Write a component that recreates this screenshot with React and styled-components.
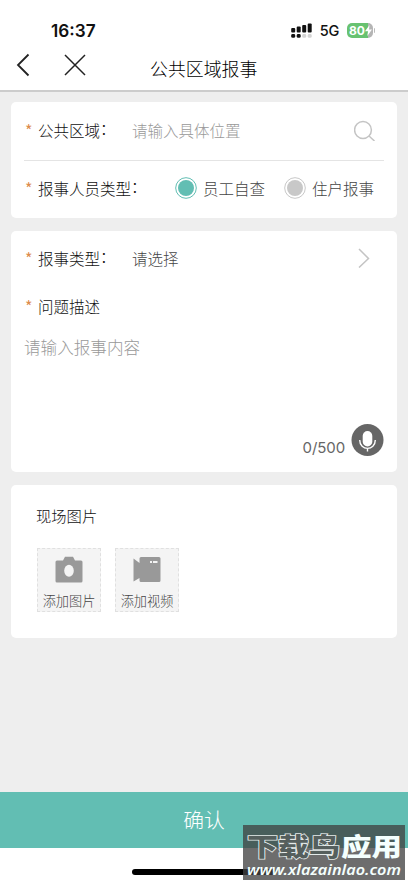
import React from 'react';
import styled, { createGlobalStyle } from 'styled-components';

const GlobalStyle = createGlobalStyle`
	* {
		box-sizing: border-box;
	}
	body {
		margin: 0;
		background: #fff;
		font-family: 'Noto Sans CJK SC', 'Liberation Sans', sans-serif;
		font-weight: 300;
		overflow: hidden;
	}
`;

const Page = styled.div`
	position: relative;
	display: flex;
	flex-flow: column;
	width: 408px;
	height: 883px;
	background: #eee;
`;

const StatusBar = styled.div`
	display: flex;
	align-items: center;
	height: 43px;
	padding: 18px 34px 0 51px;
	background: #fff;
	font-family: Inter, sans-serif;
	color: #111;
`;

const Time = styled.span`
	font-size: 17.2px;
	font-weight: 600;
	margin-right: auto;
`;

const Network = styled.span`
	font-size: 14.5px;
	font-weight: 500;
	letter-spacing: -0.3px;
	margin: 0 8px 0 7px;
`;

const Battery = styled.div`
	display: flex;
	align-items: center;
	width: 26px;
	height: 15px;
	padding-left: 2px;
	border-radius: 5px;
	background: linear-gradient(90deg, #68c271 80%, #b5b5b5 80%);
	color: #fff;
	font-size: 12px;
	font-weight: 700;
`;

const BatteryTip = styled.span`
	width: 1px;
	height: 5px;
	margin: 0 -1px 0 1px;
	border-radius: 0 1px 1px 0;
	background: #bbb;
`;

const NavBar = styled.div`
	display: grid;
	grid-template-columns: 150px 1fr 150px;
	align-items: center;
	height: 49px;
	background: #fff;
	border-bottom: 2px solid #ccc;
`;

const NavIcons = styled.div`
	display: flex;
	gap: 34px;
	height: 24px;
	padding-left: 16px;
	margin-top: -3px;
`;

const Title = styled.h1`
	margin: 2px 0 0;
	font-size: 17.9px;
	font-weight: inherit;
	line-height: 26px;
	white-space: nowrap;
	color: #000;
`;

const Main = styled.main`
	flex: 1;
	display: flex;
	flex-flow: column;
	gap: 13px;
	padding: 10px 11px 0;
`;

const Card = styled.section`
	height: ${(props) => props.$height}px;
	padding: 0 13px;
	border-radius: 5px;
	background: #fff;
`;

const Row = styled.div`
	display: flex;
	align-items: center;
	height: ${(props) => props.$height}px;
	padding-bottom: 2px;
	border-bottom: ${(props) => (props.$line ? '1px solid #e4e4e4' : 'none')};
	font-size: 15.5px;
	line-height: 24px;
	white-space: nowrap;
`;

const Star = styled.span`
	flex: none;
	width: 14px;
	padding-left: 1px;
	color: #dc8b4c;
	font-size: 16px;
	font-weight: 400;
`;

const Label = styled.label`
	flex: none;
	width: ${(props) => props.$width || 94}px;
	color: #111;
`;

const Colon = styled.span`
	line-height: 1;
	vertical-align: 2px;
`;

const Value = styled.span`
	color: ${(props) => (props.$muted ? '#999' : '#444')};
	margin-right: auto;
`;

const Option = styled.span`
	display: flex;
	flex: none;
	align-items: center;
	gap: 6px;
	margin-right: 19px;
	color: #444;
`;

const Editor = styled.div`
	display: flex;
	flex-flow: column;
	justify-content: space-between;
	height: 131px;
	padding-top: 8px;
	color: #999;
	font-size: 16.6px;
	line-height: 24px;
`;

const EditorFoot = styled.div`
	display: flex;
	justify-content: flex-end;
	gap: 6px;
	height: 34px;
	color: #666;
`;

const Counter = styled.span`
	padding-top: 12px;
	font-family: Inter, sans-serif;
	font-size: 15px;
	font-weight: 400;
	letter-spacing: -0.1px;
	line-height: 24px;
`;

const CardTitle = styled.h2`
	margin: 0;
	padding: 18px 0 0 12px;
	color: #111;
	font-size: 15.3px;
	font-weight: inherit;
	line-height: 24px;
`;

const Tiles = styled.div`
	display: flex;
	gap: 14px;
	padding: 21px 0 0 13px;
`;

const Tile = styled.div`
	display: flex;
	flex-flow: column;
	align-items: center;
	width: 64px;
	height: 64px;
	padding-top: 7px;
	border: 1px dashed #e0e0e0;
	background: #f4f4f4;
	color: #444;
	font-size: 13.2px;
	line-height: 20px;
	white-space: nowrap;
	svg {
		flex: none;
		margin-bottom: 8px;
	}
`;

const Confirm = styled.div`
	height: 56px;
	background: #62beb3;
	color: #fff;
	font-size: 20.8px;
	line-height: 54px;
	text-align: center;
`;

const HomeArea = styled.div`
	height: 35px;
	padding: 21px 0 0 132px;
	background: #fff;
`;

const HomeBar = styled.div`
	width: 144px;
	height: 6px;
	border-radius: 3px;
	background: #000;
`;

const Watermark = styled.div`
	position: absolute;
	left: 243px;
	top: 825px;
	width: 162px;
	height: 55px;
	background: rgba(65, 65, 65, 0.77);
	svg {
		display: block;
	}
`;

const MarkText = styled.text`
	font-family: ${(props) =>
		props.$latin ? "'Noto Sans', sans-serif" : "'Noto Sans CJK SC', sans-serif"};
	font-size: ${(props) => (props.$latin ? 14.5 : 25)}px;
	font-style: ${(props) => (props.$latin ? 'italic' : 'normal')};
	font-weight: ${(props) => (props.$latin ? 600 : 900)};
	fill: ${(props) => (props.$hollow ? '#555f5d' : '#f4fffd')};
	stroke: #e4eae9;
	stroke-width: ${(props) => (props.$hollow ? 1.6 : 0)};
	paint-order: stroke;
`;

function Signal() {
	return (
		<svg width='22' height='16' viewBox='0 0 22 16'>
			{[0, 1, 2, 3].map((i) => (
				<g key={i}>
					<rect x={0.2 + i * 5.5} y={5 - i * 1.5} width='4' height={4.5 + i * 1.5} rx='1' fill='#111' />
					<rect x={0.2 + i * 5.5} y='11' width='4' height='3.8' rx='1.4' fill={i < 2 ? '#111' : '#d4d4d4'} />
				</g>
			))}
		</svg>
	);
}

function Choice({ on, children }) {
	return (
		<Option>
			<svg width='22' height='22' viewBox='0 0 22 22' fill='none'>
				<circle cx='11' cy='11' r='10.3' stroke={on ? '#62beb3' : '#c8c8c8'} />
				<circle cx='11' cy='11' r='8' fill={on ? '#62beb3' : '#c8c8c8'} />
			</svg>
			{children}
		</Option>
	);
}

function App() {
	return (
		<Page>
			<GlobalStyle />
			<StatusBar>
				<Time>16:37</Time>
				<Signal />
				<Network>5G</Network>
				<Battery>
					80
					<svg width='7' height='11' viewBox='0 0 7 11'>
						<path d='M4.5 0L0 6.2h3L2.3 11 7 4.5H4z' fill='#fff' />
					</svg>
				</Battery>
				<BatteryTip />
			</StatusBar>
			<NavBar>
				<NavIcons>
					<svg width='14' height='24' viewBox='0 0 14 24' fill='none' stroke='#222' strokeWidth='1.8'>
						<path d='M12.5 1.5L2 12l10.5 10.5' />
					</svg>
					<svg width='22' height='24' viewBox='0 0 22 24' fill='none' stroke='#222' strokeWidth='1.5'>
						<path d='M1 2l20 20M21 2L1 22' />
					</svg>
				</NavIcons>
				<Title>公共区域报事</Title>
			</NavBar>
			<Main>
				<Card $height={116}>
					<Row $height={59} $line>
						<Star>*</Star>
						<Label>
							公共区域<Colon>：</Colon>
						</Label>
						<Value $muted>请输入具体位置</Value>
						<svg width='30' height='22' viewBox='0 0 30 22' fill='none' stroke='#c4c4c4' strokeWidth='1.5'>
							<circle cx='9' cy='11' r='8.4' />
							<path d='M15 17l5.5 5' />
						</svg>
					</Row>
					<Row $height={56}>
						<Star>*</Star>
						<Label $width={137}>
							报事人员类型<Colon>：</Colon>
						</Label>
						<Choice on>员工自查</Choice>
						<Choice>住户报事</Choice>
					</Row>
				</Card>
				<Card $height={241}>
					<Row $height={56}>
						<Star>*</Star>
						<Label>
							报事类型<Colon>：</Colon>
						</Label>
						<Value>请选择</Value>
						<svg width='26' height='20' viewBox='0 0 26 20' fill='none' stroke='#c4c4c4' strokeWidth='1.5'>
							<path d='M1 1l9.5 9.5L1 19.5' />
						</svg>
					</Row>
					<Row $height={40}>
						<Star>*</Star>
						<Label>问题描述</Label>
					</Row>
					<Editor>
						请输入报事内容
						<EditorFoot>
							<Counter>0/500</Counter>
							<svg width='33' height='33' viewBox='0 0 33 33' fill='none'>
								<circle cx='16.5' cy='16' r='16' fill='#666' />
								<rect x='11.7' y='7' width='9.6' height='15.5' rx='4.8' fill='#fff' />
								<path d='M8.7 16c0 11.2 15.6 11.2 15.6 0M16.5 24.5v3' stroke='#fff' strokeWidth='1.4' />
							</svg>
						</EditorFoot>
					</Editor>
				</Card>
				<Card $height={153}>
					<CardTitle>现场图片</CardTitle>
					<Tiles>
						<Tile>
							<svg width='28' height='27' viewBox='0 0 28 27'>
								<path
									d='M2 4.5h6L10 .7h8l2 3.8h6q1.5 0 1.5 1.500v19q0 1.500-1.500 1.500H2Q.5 26.500 .5 25V6Q.5 4.500 2 4.500z'
									fill='#999'
								/>
								<ellipse cx='14' cy='14.7' rx='4.8' ry='6' fill='#f4f4f4' />
							</svg>
							添加图片
						</Tile>
						<Tile>
							<svg width='28' height='27' viewBox='0 0 28 27'>
								<path
									d='M.5 2.500L6.500 7V2.500q0-1.500 1.500-1.500h18q1.500 0 1.500 1.500v22q0 1.500-1.500 1.500H8q-1.500 0-1.500-1.500V22l-6 3.500z'
									fill='#999'
								/>
								<path d='M17 5h2v2h-2zM20 5h4.500v2H20z' fill='#f4f4f4' />
							</svg>
							添加视频
						</Tile>
					</Tiles>
				</Card>
			</Main>
			<Confirm>确认</Confirm>
			<HomeArea>
				<HomeBar />
			</HomeArea>
			<Watermark>
				<svg width='162' height='55' viewBox='0 0 162 55'>
					<MarkText $hollow x='4' y='31' textLength='93' lengthAdjust='spacingAndGlyphs'>
						下载鸟
					</MarkText>
					<MarkText x='98' y='31' textLength='61' lengthAdjust='spacingAndGlyphs'>
						应用
					</MarkText>
					<MarkText $latin x='4' y='50' textLength='154' lengthAdjust='spacingAndGlyphs'>
						www.xlazainlao.com
					</MarkText>
				</svg>
			</Watermark>
		</Page>
	);
}

export default App;
